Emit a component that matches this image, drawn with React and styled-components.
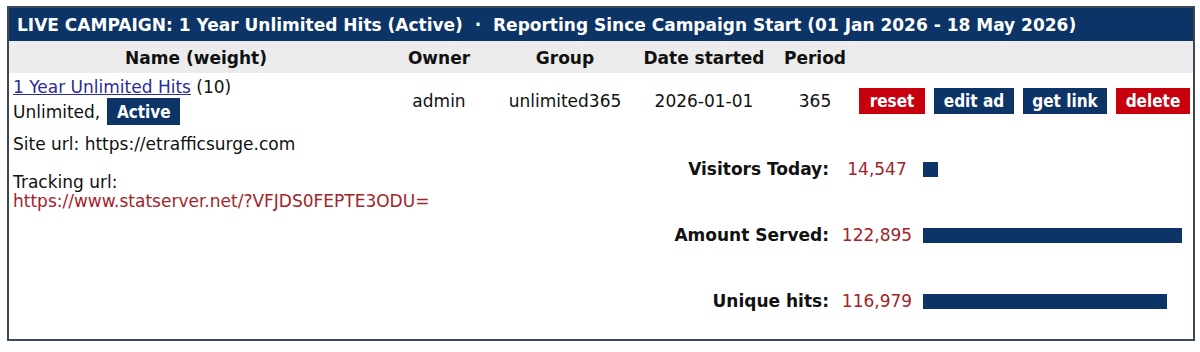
import React from "react";
import styled, { createGlobalStyle } from "styled-components";

const Global = createGlobalStyle`
  html, body { margin: 0; padding: 0; background: #fff; }
  body { font-family: "DejaVu Sans", Verdana, sans-serif; color: #111; }
`;

const Page = styled.div`
  width: 1200px;
  height: 352px;
  padding: 6px 5px 0 7px;
  box-sizing: border-box;
`;

const Panel = styled.div`
  border: 2px solid #3b4656;
  height: 335px;
  box-sizing: border-box;
  display: flex;
  flex-direction: column;
  overflow: hidden;
`;

const TitleBar = styled.div`
  flex-shrink: 0;
  background: #0c3466;
  color: #fff;
  font-weight: bold;
  font-size: 17px;
  height: 33px;
  display: flex;
  align-items: center;
  padding: 1px 0 0 8px;
  box-sizing: border-box;
  white-space: nowrap;
`;

const cols = "370px 116px 136px 142px 80px 1fr";

const HeadRow = styled.div`
  flex-shrink: 0;
  display: grid;
  grid-template-columns: ${cols};
  background: #ececec;
  height: 32px;
  align-items: center;
  font-weight: bold;
  font-size: 17px;
  padding: 2px 0 0 2px;
  box-sizing: border-box;
`;

const HeadCell = styled.div`
  text-align: center;
  white-space: nowrap;
`;

const DataRow = styled.div`
  flex-shrink: 0;
  display: grid;
  grid-template-columns: ${cols};
  align-items: center;
  font-size: 17px;
  padding: 3px 0 3px 2px;
`;

const Cell = styled.div`
  text-align: center;
  white-space: nowrap;
`;

const NameCell = styled.div`
  padding-left: 2px;
  display: flex;
  flex-direction: column;
`;

const Line = styled.div`
  display: flex;
  align-items: center;
  gap: 7px;
  min-height: 22px;
  white-space: nowrap;
`;

const Link = styled.a`
  color: #2a2a9e;
  text-decoration: underline;
`;

const narrow = `"Liberation Sans Narrow", "DejaVu Sans Condensed", Roboto, sans-serif`;

const Badge = styled.span`
  display: inline-flex;
  align-items: center;
  justify-content: center;
  background: #0c3466;
  color: #fff;
  font-weight: bold;
  height: 27px;
  width: 73px;
  font-size: 17px;
  font-family: ${narrow};
`;

const Actions = styled.div`
  display: flex;
  gap: 9px;
  padding-left: 4px;
`;

const Button = styled.button`
  flex-shrink: 0;
  border: none;
  height: 26px;
  width: ${(p) => p.$w}px;
  padding: 0;
  background: ${(p) => (p.$danger ? "#c8000e" : "#0c3466")};
  color: #fff;
  font-weight: bold;
  font-size: 17px;
  font-family: ${narrow};
  white-space: nowrap;
  cursor: pointer;
`;

const Body = styled.div`
  display: flex;
  flex: 1;
  min-height: 0;
`;

const Left = styled.div`
  width: 640px;
  padding: 7px 0 0 4px;
  font-size: 17px;
  line-height: 19px;
`;

const Para = styled.p`
  margin: 0 0 19px 0;
`;

const Tracking = styled.a`
  color: #a3232b;
  text-decoration: none;
`;

const Stats = styled.div`
  display: grid;
  grid-template-columns: 180px 88px 1fr;
  grid-auto-rows: 66px;
  align-items: center;
  padding-top: 8px;
  flex: 1;
  align-content: start;
`;

const Label = styled.div`
  font-weight: bold;
  font-size: 17px;
  text-align: right;
  padding-right: 4px;
  white-space: nowrap;
`;

const Value = styled.div`
  color: #a3232b;
  font-size: 17px;
  text-align: center;
`;

const Bar = styled.div`
  height: 15px;
  background: #0c3466;
  margin-left: 2px;
`;

const stats = [
  { label: "Visitors Today:", value: "14,547", width: 15 },
  { label: "Amount Served:", value: "122,895", width: 259 },
  { label: "Unique hits:", value: "116,979", width: 244 },
];

export default function App() {
  return (
    <>
      <Global />
      <Page>
        <Panel>
          <TitleBar>
            LIVE CAMPAIGN: 1 Year Unlimited Hits (Active) &nbsp;·&nbsp; Reporting Since Campaign Start (01 Jan 2026 - 18 May 2026)
          </TitleBar>
          <HeadRow>
            <HeadCell>Name (weight)</HeadCell>
            <HeadCell>Owner</HeadCell>
            <HeadCell>Group</HeadCell>
            <HeadCell>Date started</HeadCell>
            <HeadCell>Period</HeadCell>
            <HeadCell />
          </HeadRow>
          <DataRow>
            <NameCell>
              <Line>
                <span>
                  <Link href="#">1 Year Unlimited Hits</Link> (10)
                </span>
              </Line>
              <Line>
                <span>Unlimited,</span>
                <Badge>Active</Badge>
              </Line>
            </NameCell>
            <Cell>admin</Cell>
            <Cell>unlimited365</Cell>
            <Cell>2026-01-01</Cell>
            <Cell>365</Cell>
            <Actions>
              <Button $danger $w={66}>reset</Button>
              <Button $w={80}>edit ad</Button>
              <Button $w={84}>get link</Button>
              <Button $danger $w={74}>delete</Button>
            </Actions>
          </DataRow>
          <Body>
            <Left>
              <Para>Site url: https://etrafficsurge.com</Para>
              <Para>
                Tracking url:
                <br />
                <Tracking href="#">https://www.statserver.net/?VFJDS0FEPTE3ODU=</Tracking>
              </Para>
            </Left>
            <Stats>
              {stats.map((s) => (
                <React.Fragment key={s.label}>
                  <Label>{s.label}</Label>
                  <Value>{s.value}</Value>
                  <div>
                    <Bar style={{ width: s.width }} />
                  </div>
                </React.Fragment>
              ))}
            </Stats>
          </Body>
        </Panel>
      </Page>
    </>
  );
}
